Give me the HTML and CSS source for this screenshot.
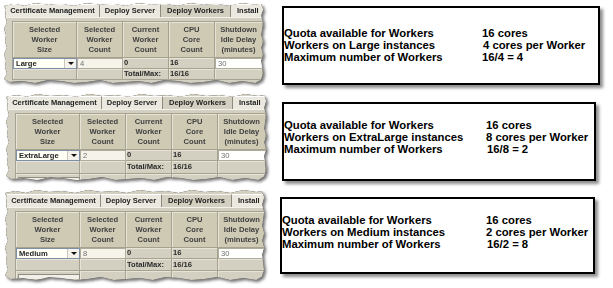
FILE: index.html
```html
<!DOCTYPE html>
<html lang="en">
<head>
    <meta charset="UTF-8">
    <meta name="viewport" content="width=device-width, initial-scale=1.0">
    <title>Deploy Workers Quota</title>
    <link rel="stylesheet" href="styles.css">
</head>
<body>
    <div class="page">

        <!-- Large -->
        <section class="row row-1">
            <div class="shot">
                <div class="panel">
                    <div class="tabs">
                        <span class="tab tab-cert">Certificate Management</span>
                        <span class="tab tab-server">Deploy Server</span>
                        <span class="tab tab-workers active">Deploy Workers</span>
                        <span class="tab tab-install">Install</span>
                    </div>
                    <div class="grid">
                        <div class="cell head">Selected<br>Worker<br>Size</div>
                        <div class="cell head">Selected<br>Worker<br>Count</div>
                        <div class="cell head">Current<br>Worker<br>Count</div>
                        <div class="cell head">CPU<br>Core<br>Count</div>
                        <div class="cell head">Shutdown<br>Idle Delay<br>(minutes)</div>

                        <div class="cell combo"><span class="choice">Large</span><span class="drop"><span class="arrow"></span></span></div>
                        <div class="cell field">4</div>
                        <div class="cell value">0</div>
                        <div class="cell value">16</div>
                        <div class="cell field white">30</div>

                        <div class="cell total"></div>
                        <div class="cell total"></div>
                        <div class="cell total value">Total/Max:</div>
                        <div class="cell total value">16/16</div>
                        <div class="cell total"></div>
                    </div>
                </div>
            </div>
            <div class="note">
                <span>Quota available for Workers</span><span>16 cores</span>
                <span>Workers on Large instances</span><span class="nudge">4 cores per Worker</span>
                <span>Maximum number of Workers</span><span>16/4 = 4</span>
            </div>
        </section>

        <!-- ExtraLarge -->
        <section class="row row-2">
            <div class="shot">
                <div class="panel">
                    <div class="tabs">
                        <span class="tab tab-cert">Certificate Management</span>
                        <span class="tab tab-server">Deploy Server</span>
                        <span class="tab tab-workers active">Deploy Workers</span>
                        <span class="tab tab-install">Install</span>
                    </div>
                    <div class="grid">
                        <div class="cell head">Selected<br>Worker<br>Size</div>
                        <div class="cell head">Selected<br>Worker<br>Count</div>
                        <div class="cell head">Current<br>Worker<br>Count</div>
                        <div class="cell head">CPU<br>Core<br>Count</div>
                        <div class="cell head">Shutdown<br>Idle Delay<br>(minutes)</div>

                        <div class="cell combo"><span class="choice">ExtraLarge</span><span class="drop"><span class="arrow"></span></span></div>
                        <div class="cell field">2</div>
                        <div class="cell value">0</div>
                        <div class="cell value">16</div>
                        <div class="cell field white">30</div>

                        <div class="cell total"></div>
                        <div class="cell total"></div>
                        <div class="cell total value">Total/Max:</div>
                        <div class="cell total value">16/16</div>
                        <div class="cell total"></div>

                        <div class="cell extra"><span class="stub"></span></div>
                        <div class="cell extra"></div>
                        <div class="cell extra"></div>
                        <div class="cell extra"></div>
                        <div class="cell extra"></div>
                    </div>
                </div>
            </div>
            <div class="note">
                <span>Quota available for Workers</span><span>16 cores</span>
                <span>Workers on ExtraLarge instances</span><span>8 cores per Worker</span>
                <span>Maximum number of Workers</span><span class="nudge">16/8 = 2</span>
            </div>
        </section>

        <!-- Medium -->
        <section class="row row-3">
            <div class="shot">
                <div class="panel">
                    <div class="tabs">
                        <span class="tab tab-cert">Certificate Management</span>
                        <span class="tab tab-server">Deploy Server</span>
                        <span class="tab tab-workers active">Deploy Workers</span>
                        <span class="tab tab-install">Install</span>
                    </div>
                    <div class="grid">
                        <div class="cell head">Selected<br>Worker<br>Size</div>
                        <div class="cell head">Selected<br>Worker<br>Count</div>
                        <div class="cell head">Current<br>Worker<br>Count</div>
                        <div class="cell head">CPU<br>Core<br>Count</div>
                        <div class="cell head">Shutdown<br>Idle Delay<br>(minutes)</div>

                        <div class="cell combo"><span class="choice">Medium</span><span class="drop"><span class="arrow"></span></span></div>
                        <div class="cell field">8</div>
                        <div class="cell value">0</div>
                        <div class="cell value">16</div>
                        <div class="cell field white">30</div>

                        <div class="cell total"></div>
                        <div class="cell total"></div>
                        <div class="cell total value">Total/Max:</div>
                        <div class="cell total value">16/16</div>
                        <div class="cell total"></div>

                        <div class="cell extra"><span class="stub"></span></div>
                        <div class="cell extra"></div>
                        <div class="cell extra"></div>
                        <div class="cell extra"></div>
                        <div class="cell extra"></div>
                    </div>
                </div>
            </div>
            <div class="note">
                <span>Quota available for Workers</span><span>16 cores</span>
                <span>Workers on Medium instances</span><span>2 cores per Worker</span>
                <span>Maximum number of Workers</span><span class="nudge">16/2 = 8</span>
            </div>
        </section>

    </div>
</body>
</html>
```

FILE: styles.css
```css
body {
    margin: 0;
    background-color: #ffffff;
    font-family: "Liberation Sans", Arial, sans-serif;
}

.page {
    width: 613px;
    height: 288px;
    overflow: hidden;
    display: flex;
    flex-direction: column;
}

.row {
    display: flex;
    align-items: flex-start;
}

.row-1 {
    height: 92px;
}

.row-2 {
    height: 96px;
}

.row-3 {
    height: 100px;
}

/* torn screenshot */
.shot {
    filter: drop-shadow(0 0 0.7px #2a2a2a) drop-shadow(2px 2px 1.5px rgba(0, 0, 0, 0.55));
}

.panel {
    background-color: #d4d0c1;
    overflow: hidden;
    clip-path: polygon(
        0 3px, 4% 1px, 8% 3px, 12% 0, 17% 2px, 22% 1px, 27% 3px, 32% 0, 37% 2px, 42% 1px, 47% 3px,
        52% 0, 57% 2px, 62% 1px, 67% 3px, 72% 0, 77% 2px, 82% 1px, 87% 3px, 92% 0, 97% 2px, calc(100% - 2px) 1px,
        100% 8%, calc(100% - 2px) 16%, 100% 24%, calc(100% - 1px) 32%, calc(100% - 2px) 40%, 100% 48%,
        calc(100% - 2px) 56%, 100% 64%, calc(100% - 2px) 72%, calc(100% - 1px) 80%, 100% 88%, calc(100% - 2px) 96%,
        97% 100%, 92% calc(100% - 2px), 87% 100%, 82% calc(100% - 3px), 77% calc(100% - 1px), 72% 100%,
        67% calc(100% - 2px), 62% calc(100% - 3px), 57% 100%, 52% calc(100% - 2px), 47% calc(100% - 1px),
        42% 100%, 37% calc(100% - 3px), 32% calc(100% - 1px), 27% 100%, 22% calc(100% - 2px),
        17% calc(100% - 3px), 12% 100%, 7% calc(100% - 2px), 2% calc(100% - 1px),
        0 95%, 3px 88%, 1px 80%, 2px 72%, 0 64%, 3px 56%, 1px 48%, 2px 40%, 0 32%, 3px 24%, 1px 16%, 2px 8%
    );
}

.row-1 .shot {
    margin: 3px 0 0 4px;
}

.row-1 .panel {
    width: 259px;
    padding: 1px 0 3px;
}

.row-2 .shot {
    margin: 2px 0 0 6px;
}

.row-2 .panel {
    width: 260px;
    padding: 2px 0 0;
}

.row-3 .shot {
    margin: 2px 0 0 5px;
}

.row-3 .panel {
    width: 259px;
    padding: 4px 0 0;
}

/* tabs */
.tabs {
    display: flex;
    height: 13px;
    padding-left: 2px;
    border-bottom: 1px solid #f4f2ea;
}

.tab {
    flex: none;
    box-sizing: border-box;
    height: 13px;
    line-height: 12px;
    font-size: 7.5px;
    font-weight: bold;
    color: #222222;
    text-align: center;
    background-color: #ebe8df;
    border-right: 1px solid #8e8a7e;
    border-top: 1px solid #ffffff;
    white-space: nowrap;
}

.tab.active {
    background-color: #d4d0c1;
    border-top-color: #f4f2ea;
}

.tab-cert {
    width: 94px;
}

.tab-server {
    width: 61px;
}

.tab-workers {
    width: 70px;
}

.tab-install {
    width: 40px;
    text-align: left;
    padding-left: 6px;
}

/* worker table */
.grid {
    display: grid;
    grid-template-columns: 64px 46px 46px 46px 48px;
    grid-template-rows: 36px 11px 11px;
    margin-top: 3px;
    border-top: 1px solid #a7a290;
    border-left: 1px solid #a7a290;
}

.row-1 .grid {
    margin-left: 8px;
}

.row-2 .grid {
    margin-left: 9px;
    grid-template-rows: 36px 11px 13px 6px;
}

.row-3 .grid {
    margin-left: 10px;
    grid-template-rows: 36px 11px 12px 9px;
}

.cell {
    box-sizing: border-box;
    border-right: 1px solid #a7a290;
    border-bottom: 1px solid #a7a290;
    box-shadow: inset 1px 1px 0 #e6e3d7;
    font-size: 7.6px;
    font-weight: bold;
    color: #363636;
    white-space: nowrap;
}

.head {
    background-color: #cfcab4;
    text-align: center;
    line-height: 10px;
    padding-top: 3px;
    color: #404040;
}

.value {
    line-height: 10px;
    padding-left: 1px;
    color: #2a2a2a;
}

.total {
    display: flex;
    align-items: center;
}

.extra {
    border-bottom: none;
}

.stub {
    display: block;
    width: 60px;
    height: 4px;
    margin: 3px 0 0 2px;
    background-color: #f1efe7;
    border: 1px solid #8f8c82;
    border-bottom: none;
}

.combo {
    display: flex;
    align-items: stretch;
    background-color: #fffff6;
    border: 1px solid #7f8fa8;
    box-shadow: none;
    color: #1e1e1e;
}

.choice {
    flex: 1;
    padding-left: 2px;
    line-height: 9px;
}

.drop {
    width: 11px;
    display: flex;
    align-items: center;
    justify-content: center;
    border-left: 1px solid #c9c6bb;
    background-color: #f4f2ea;
}

.arrow {
    width: 0;
    height: 0;
    border-left: 3px solid transparent;
    border-right: 3px solid transparent;
    border-top: 3px solid #111111;
}

.field {
    background-color: #f6f4ea;
    border: 1px solid #b0ac9c;
    box-shadow: none;
    padding-left: 2px;
    line-height: 9px;
    font-weight: normal;
    color: #6f6f6f;
}

.field.white {
    background-color: #fffffd;
}

/* explanation boxes */
.note {
    display: grid;
    grid-template-columns: 198px auto;
    align-content: start;
    box-sizing: border-box;
    background-color: #ffffff;
    border: 2px solid #000000;
    box-shadow: 3px 3px 3px rgba(0, 0, 0, 0.45);
    font-size: 11.3px;
    font-weight: bold;
    line-height: 12px;
    color: #000000;
}

.note .nudge {
    padding-left: 1px;
}

.row-1 .note {
    width: 318px;
    height: 79px;
    margin: 6px 0 0 19px;
    padding-top: 19px;
}

.row-2 .note {
    width: 314px;
    height: 79px;
    margin: 10px 0 0 16px;
    padding-top: 15px;
    grid-template-columns: 202px auto;
}

.row-3 .note {
    width: 315px;
    height: 77px;
    margin: 9px 0 0 16px;
    padding-top: 15px;
    grid-template-columns: 204px auto;
}
```
